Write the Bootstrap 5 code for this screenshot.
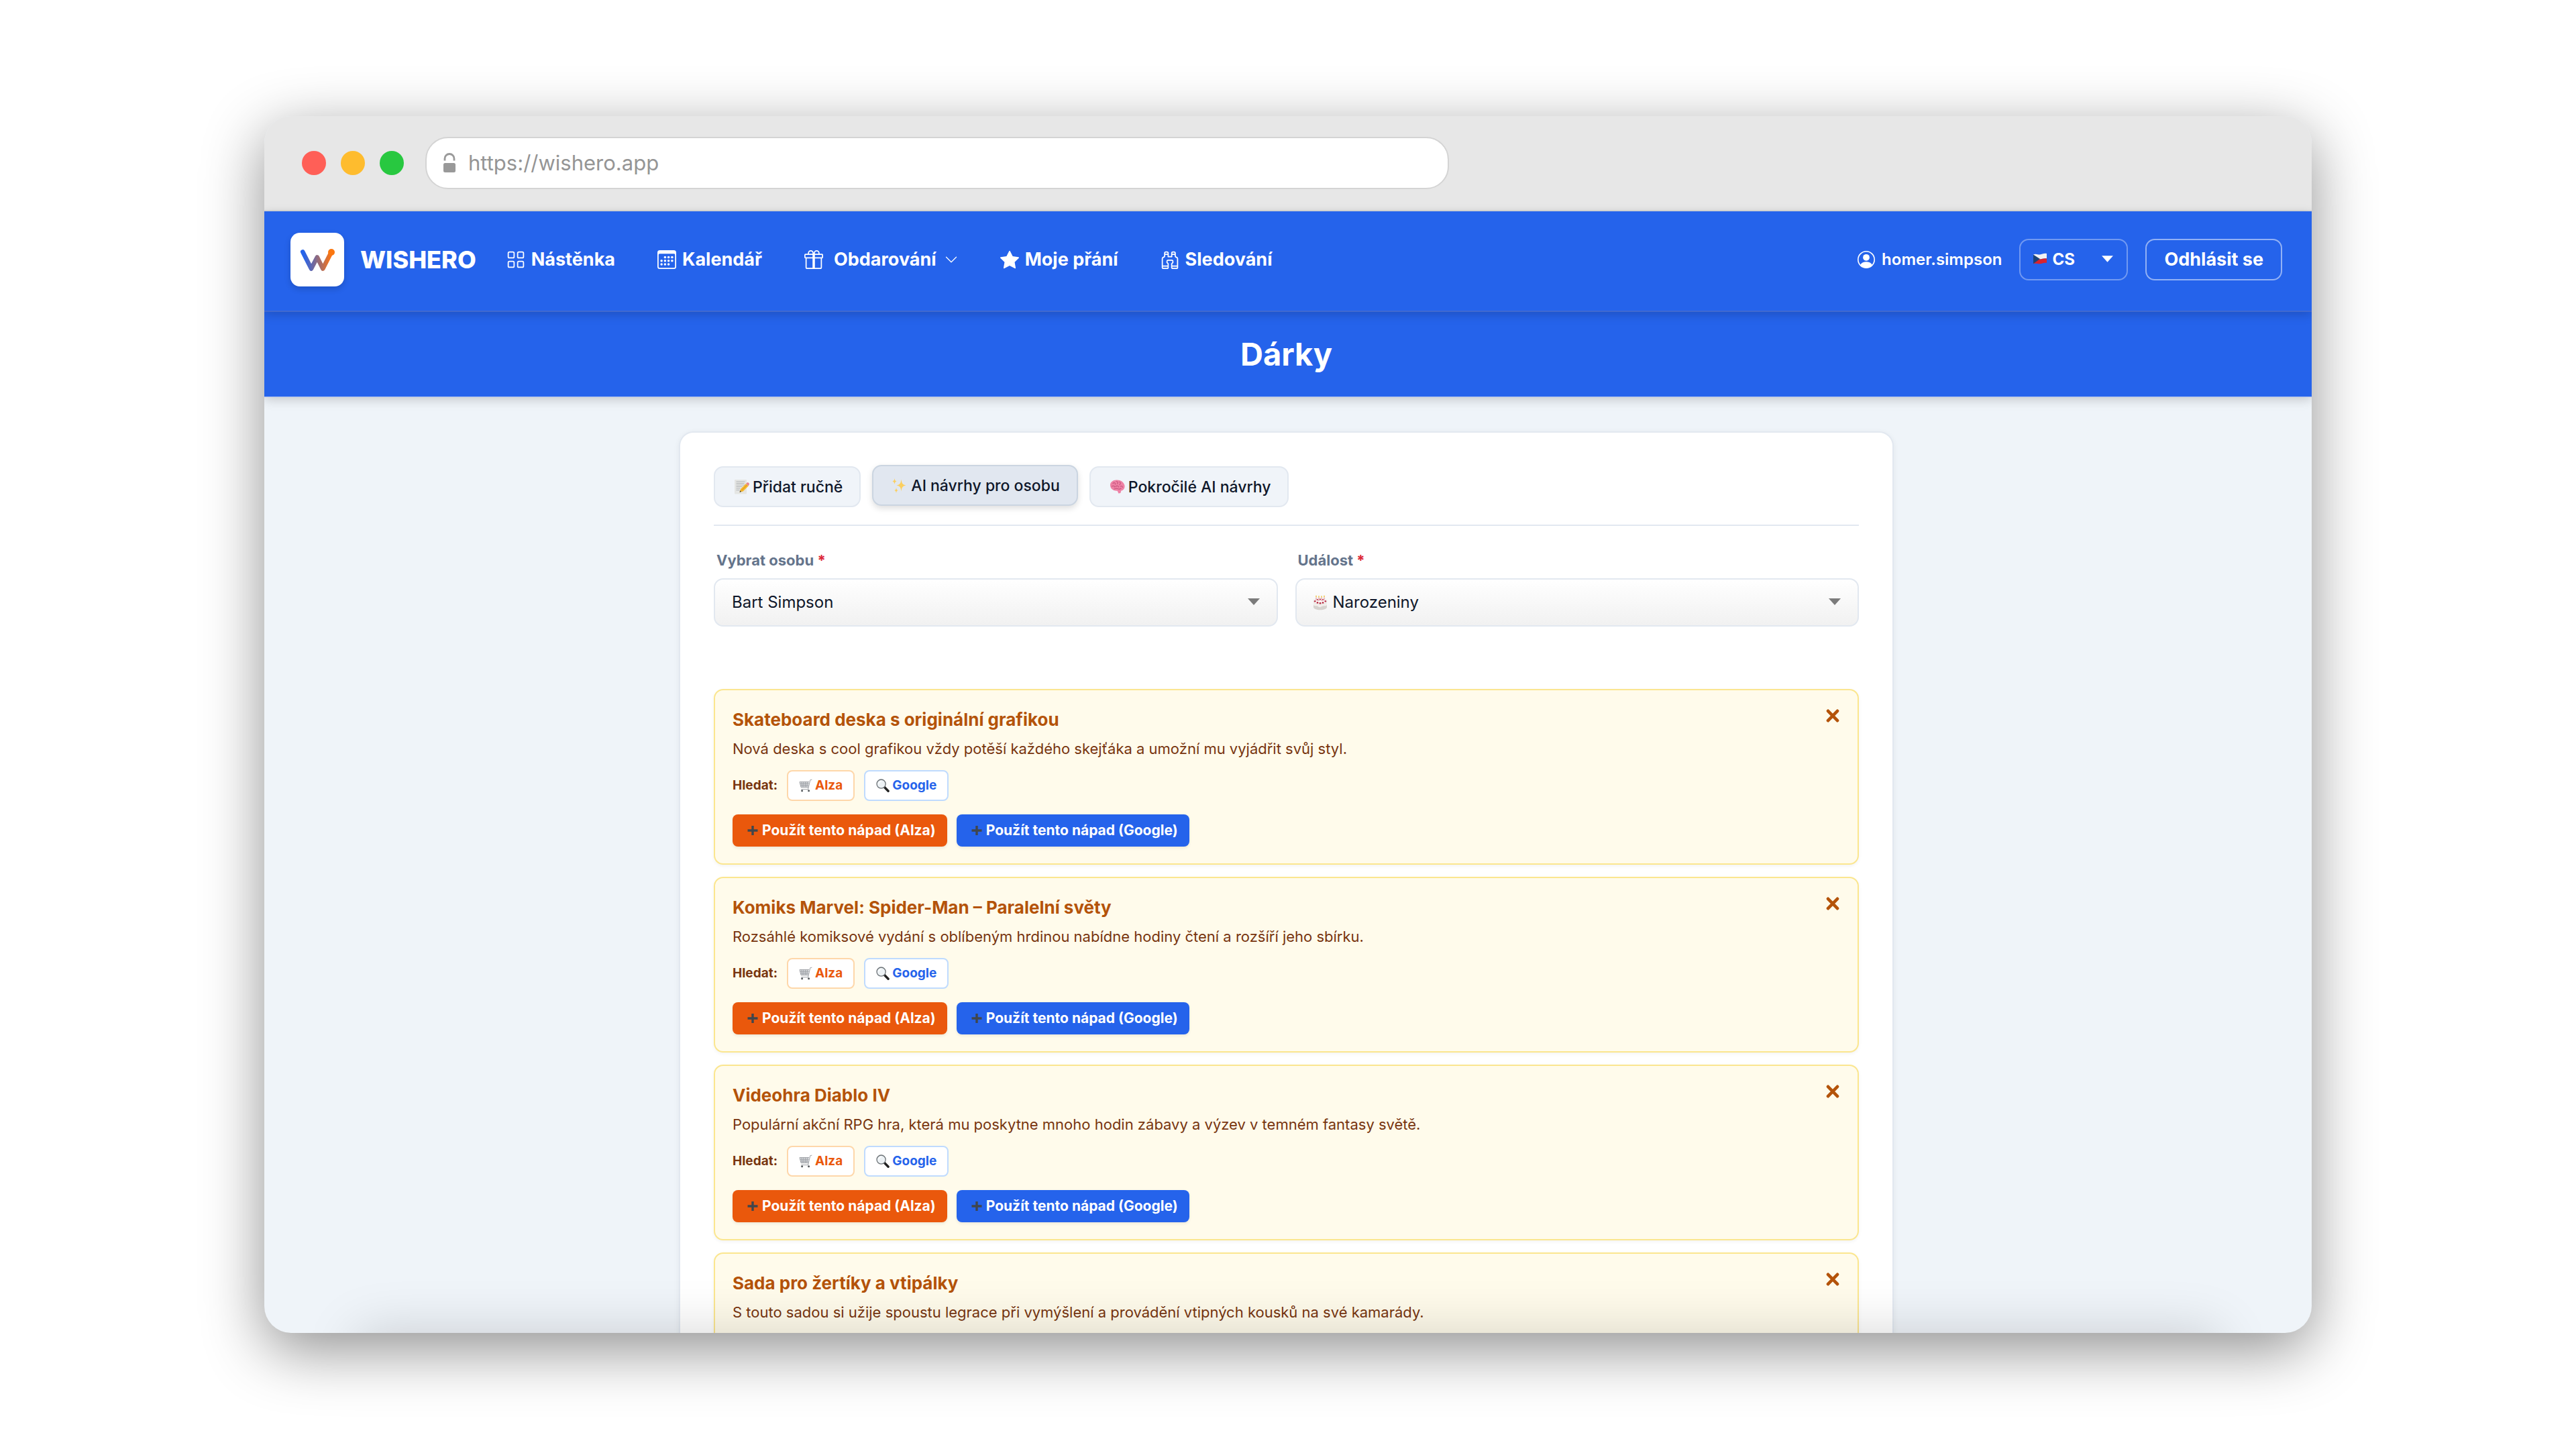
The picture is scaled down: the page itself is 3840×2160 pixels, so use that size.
<!DOCTYPE html>
<html lang="cs">
<head>
<meta charset="utf-8">
<meta name="viewport" content="width=device-width, initial-scale=1">
<title>WISHERO – Dárky</title>
<link href="https://cdn.jsdelivr.net/npm/bootstrap@5.3.0/dist/css/bootstrap.min.css" rel="stylesheet">
<style>
  :root { --brand: #2563eb; --ink: #0f172a; --line: #e2e8f0; --surface: #eff4f9; }
  body { font-family: Inter, "Liberation Sans", sans-serif; background: #fff; color: var(--ink); padding: 173px 394px; }
  svg { display: block; flex: none; }
  select { appearance: none; }

  /* Browser frame */
  .browser { height: calc(100vh - 346px); border-radius: 40px; background: var(--surface); box-shadow: 0 25px 90px rgba(0,0,0,.44); }
  .browser::after { content: ""; position: absolute; left: 140px; right: 140px; top: 100%; height: 90px; box-shadow: 0 0 80px rgba(0,0,0,.17); pointer-events: none; }
  .chrome { height: 142px; padding: 0 56px; background: #e7e7e7; border-bottom: 2px solid #dadada; }
  .lights { gap: 22px; margin-right: 32px; }
  .light { width: 36px; height: 36px; border-radius: 50%; }
  .light-close { background: #ff5f57; }
  .light-min { background: #febc2e; }
  .light-max { background: #28c840; }
  .address { width: 51.9%; height: 78px; padding: 0 24px; gap: 18px; border: 2px solid #d4d4d4; border-radius: 34px; background: #fff; color: #999; }
  .address input { border: 0; outline: 0; padding: 0; background: none; color: #959595; font-size: 31px; line-height: 40px; }

  /* Top navigation */
  .topbar { padding: 32px 44px 36px 39px; background: var(--brand); border-bottom: 2px solid #4169d0; box-shadow: 0 4px 14px rgba(0,0,0,.18); z-index: 2; }
  .brand { gap: 24px; font-size: 36px; line-height: 44px; font-weight: 800; color: #fff; text-decoration: none; margin-right: 45px; }
  .brand svg { border-radius: 14px; background: #fff; box-shadow: 0 4px 10px rgba(0,0,0,.16); }
  .menu { gap: 63px; font-size: 27px; line-height: 36px; }
  .menu a, .menu button { display: flex; align-items: center; gap: 9px; padding: 0; border: 0; background: none; color: #fff; text-decoration: none; font-weight: 700; white-space: nowrap; }
  .menu button { gap: 16px; }
  .menu button svg:last-child { margin-left: -4px; }
  .account { gap: 26px; color: #fff; }
  .user { gap: 10px; font-size: 24px; line-height: 32px; font-weight: 600; color: #fff; text-decoration: none; }
  .lang select { width: 162px; height: 62px; padding: 0 0 0 47px; border: 2px solid rgba(255,255,255,.35); border-radius: 14px; color: #fff; font-size: 24px; font-weight: 700; background: none; }
  .lang .flag { position: absolute; left: 20px; top: 21px; pointer-events: none; }
  .lang .caret { position: absolute; right: 22px; top: 25px; pointer-events: none; }
  .btn-logout { height: 62px; padding: 0 26px; border: 2px solid rgba(255,255,255,.5); border-radius: 14px; color: #fff; font-size: 27px; line-height: 36px; font-weight: 700; }
  .titlebar { height: 127px; padding-right: 5px; background: var(--brand); border-bottom: 1px solid #9db5ee; box-shadow: 0 3px 16px rgba(0,0,0,.2); z-index: 1; }
  .titlebar h1 { font-size: 47px; line-height: 60px; font-weight: 700; color: #fff; }

  /* Content panel */
  .stage { padding: 51px 5px 51px 0; }
  .panel { max-width: 1811px; padding: 50px; border: 2px solid var(--line); border-radius: 22px; background: #fff; box-shadow: 0 2px 10px rgba(15,23,42,.06); }
  .tabs { gap: 17px; padding-bottom: 26px; border-bottom: 2px solid var(--line); margin-bottom: 36px; }
  .tab { height: 61px; padding: 0 25px 0 28px; gap: 5px; display: flex; align-items: center; border: 2px solid var(--line); border-radius: 14px; background: #f0f4f9; color: var(--ink); font-size: 23px; line-height: 30px; font-weight: 500; white-space: nowrap; }
  .tab.active { background: #e1e7f0; border-color: #cbd5e1; box-shadow: 0 4px 10px rgba(0,0,0,.13); transform: translateY(-2px); }
  .fields { --bs-gutter-x: 26px; margin-bottom: 93px; }
  .fields label { display: block; padding-left: 4px; margin-bottom: 12px; font-size: 22px; line-height: 30px; font-weight: 700; color: #64748b; }
  .req { color: #dc2638; }
  .pick { color: #7b7b7b; }
  .pick select { height: 72px; padding: 0 25px; border: 2px solid var(--line); border-radius: 14px; color: var(--ink); font-size: 24px; line-height: 32px; background: linear-gradient(#fff, #f1f1f1); }
  .pick .with-icon { padding-left: 54px; }
  .pick .cake { position: absolute; left: 26px; top: 25px; pointer-events: none; }
  .pick .caret { position: absolute; right: 27px; top: 30px; pointer-events: none; }

  /* Gift ideas */
  .ideas { gap: 18px; }
  .idea { min-height: 262px; padding: 26px 24px 25px 26px; border: 2px solid #fbe68f; border-radius: 14px; background: #fffbeb; box-shadow: 0 2px 5px rgba(0,0,0,.05); }
  .idea h2 { margin: 0 0 8px; font-size: 26px; line-height: 36px; font-weight: 700; color: #b45309; }
  .idea p { margin: 0 0 15px; font-size: 22px; line-height: 34px; color: #78350f; }
  .find { gap: 14px; margin-bottom: 20px; font-size: 19px; line-height: 26px; font-weight: 700; color: #78350f; }
  .find a { display: flex; align-items: center; gap: 4px; height: 46px; padding: 0 16px; border: 2px solid; border-radius: 8px; background: #fff; text-decoration: none; }
  .find .to-alza { color: #ea580c; border-color: #fed7aa; }
  .find .to-google { color: var(--brand); border-color: #bfdbfe; }
  .uses { gap: 14px; }
  .uses button { display: flex; align-items: center; gap: 6px; height: 48px; padding: 0 17px 0 22px; border: 0; border-radius: 8px; color: #fff; font-size: 21px; line-height: 28px; font-weight: 700; white-space: nowrap; box-shadow: 0 2px 4px rgba(0,0,0,.08); }
  .use-alza { background: #ea580c; }
  .use-google { background: var(--brand); }
  .dismiss { padding: 2px 3px; border: 0; background: none; color: #b45309; }
</style>
</head>
<body>

<svg width="0" height="0" class="position-absolute" aria-hidden="true">
  <defs>
    <symbol id="i-cart" viewBox="0 0 20 20">
      <path d="M1 4.500h14.200L14 12.600H3z" fill="#dfe1e4"/>
      <path d="M1 4.500h14.200M1.800 7.200h13M2.300 9.900h12.200M4 4.500l1 8M6.800 4.500l.4 8M9.600 4.500v8M12.400 4.500l-.6 8M1 4.500l2 8.100h11.200M3.400 15.600h11M19.400 1.200l-2.600.5-3.200 13.600" fill="none" stroke="#969a9f" stroke-width=".9"/>
      <circle cx="4.600" cy="17.800" r="1.500" fill="#55595d"/><circle cx="14.600" cy="17.800" r="1.500" fill="#55595d"/>
    </symbol>
    <symbol id="i-lens" viewBox="0 0 20 20">
      <path d="M12.300 12.300l5.800 6" stroke="#222" stroke-width="3.400" stroke-linecap="round"/>
      <circle cx="7.600" cy="7.600" r="6.600" fill="#edf2f5" stroke="#6b7175" stroke-width="1.300"/>
      <path d="M4 6.600a4 4 0 0 1 3.400-2.700" fill="none" stroke="#fff" stroke-width="1.300" stroke-linecap="round"/>
    </symbol>
    <symbol id="i-plus" viewBox="0 0 16 16"><path d="M8 1v14M.5 8h15" stroke="#40464c" stroke-width="3.400" fill="none"/></symbol>
    <symbol id="i-cross" viewBox="0 0 20 20"><path d="M3 2.800l14 14.400M17 2.800L3 17.200" stroke="currentColor" stroke-width="4.600" fill="none" stroke-linecap="round"/></symbol>
    <symbol id="i-caret" viewBox="0 0 18 10"><path d="M0 0h18L9 10z" fill="currentColor"/></symbol>
    <linearGradient id="wgrad" gradientUnits="userSpaceOnUse" x1="18" y1="0" x2="62" y2="0">
      <stop offset="0.05" stop-color="#2563eb"/><stop offset="0.95" stop-color="#f97316"/>
    </linearGradient>
  </defs>
</svg>

<div class="browser position-relative overflow-hidden d-flex flex-column">
  <div class="chrome d-flex align-items-center flex-shrink-0">
    <div class="lights d-flex"><span class="light light-close"></span><span class="light light-min"></span><span class="light light-max"></span></div>
    <div class="address d-flex align-items-center">
      <svg width="20" height="30" viewBox="0 0 20 30"><rect x="1" y="15" width="18" height="14" rx="2.500" fill="#999"/><path d="M3 11.500V8.500a7 7 0 0 1 14 0v3" fill="none" stroke="#999" stroke-width="2.800"/></svg>
      <input class="flex-grow-1" type="text" value="https://wishero.app" aria-label="Adresa">
    </div>
  </div>

  <nav class="topbar d-flex align-items-center justify-content-between position-relative flex-shrink-0">
    <div class="d-flex align-items-center">
      <a class="brand d-flex align-items-center" href="#">
        <svg width="80" height="80" viewBox="0 0 80 80"><path d="M18.300 28.500L31 53.500 39.800 36.500 48.300 53.500 60.500 29.500" fill="none" stroke="url(#wgrad)" stroke-width="6.600" stroke-linecap="round" stroke-linejoin="round"/><circle cx="61" cy="29" r="5" fill="#fb7710"/></svg>
        WISHERO
      </a>
      <div class="menu d-flex align-items-center">
        <a href="#"><svg width="28" height="28" viewBox="0 0 16 16" fill="none" stroke="#fff"><rect x="1.500" y="1.500" width="5" height="5" rx="1"/><rect x="9.500" y="1.500" width="5" height="5" rx="1"/><rect x="1.500" y="9.500" width="5" height="5" rx="1"/><rect x="9.500" y="9.500" width="5" height="5" rx="1"/></svg>Nástěnka</a>
        <a href="#"><svg width="28" height="28" viewBox="0 0 16 16" fill="#fff"><path d="M14 0H2a2 2 0 0 0-2 2v12a2 2 0 0 0 2 2h12a2 2 0 0 0 2-2V2a2 2 0 0 0-2-2zM1 3.857C1 3.384 1.448 3 2 3h12c.552 0 1 .384 1 .857v10.286c0 .473-.448.857-1 .857H2c-.552 0-1-.384-1-.857V3.857z"/><circle cx="6.500" cy="6" r="1"/><circle cx="9.500" cy="6" r="1"/><circle cx="12.500" cy="6" r="1"/><circle cx="3.500" cy="9" r="1"/><circle cx="6.500" cy="9" r="1"/><circle cx="9.500" cy="9" r="1"/><circle cx="12.500" cy="9" r="1"/><circle cx="3.500" cy="12" r="1"/><circle cx="6.500" cy="12" r="1"/><circle cx="9.500" cy="12" r="1"/></svg>Kalendář</a>
        <button type="button" aria-haspopup="true"><svg width="28" height="28" viewBox="0 0 16 16" fill="#fff"><path d="M3 2.500a2.500 2.500 0 0 1 5 0 2.500 2.500 0 0 1 5 0v.006c0 .07 0 .27-.038.494H15a1 1 0 0 1 1 1v2a1 1 0 0 1-1 1v7.500a1.500 1.500 0 0 1-1.500 1.500h-11A1.500 1.500 0 0 1 1 14.500V7a1 1 0 0 1-1-1V4a1 1 0 0 1 1-1h2.038A2.968 2.968 0 0 1 3 2.506V2.500zm1.068.5H7v-.5a1.500 1.500 0 1 0-3 0c0 .085.002.274.045.43a.522.522 0 0 0 .023.07zM9 3h2.932a.56.56 0 0 0 .023-.07c.043-.156.045-.345.045-.43a1.500 1.500 0 0 0-3 0V3zM1 4v2h6V4H1zm8 0v2h6V4H9zm5 3H9v8h4.500a.5.5 0 0 0 .5-.5V7zm-7 8V7H2v7.500a.5.5 0 0 0 .5.5H7z"/></svg>Obdarování<svg width="20" height="20" viewBox="0 0 16 16" fill="none" stroke="#fff" stroke-linecap="round" stroke-linejoin="round"><path d="M2 5l6 6 6-6"/></svg></button>
        <a href="#"><svg width="28" height="28" viewBox="0 0 16 16" fill="#fff"><path d="M3.612 15.443c-.386.198-.824-.149-.746-.592l.83-4.730L.173 6.765c-.329-.314-.158-.888.283-.95l4.898-.696L7.538.792c.197-.39.73-.39.927 0l2.184 4.327 4.898.696c.441.062.612.636.282.95l-3.522 3.356.83 4.730c.078.443-.36.79-.746.592L8 13.187l-4.389 2.256z"/></svg>Moje přání</a>
        <a href="#"><svg width="28" height="28" viewBox="0 0 16 16" fill="#fff"><path d="M3 2.500A1.500 1.500 0 0 1 4.500 1h1A1.500 1.500 0 0 1 7 2.500V5h2V2.500A1.500 1.500 0 0 1 10.500 1h1A1.500 1.500 0 0 1 13 2.500v2.382a.5.5 0 0 0 .276.447l.895.447A1.500 1.500 0 0 1 15 7.118V14.500a1.500 1.500 0 0 1-1.500 1.500h-3A1.500 1.500 0 0 1 9 14.500v-3a.5.5 0 0 1 .146-.354l.854-.853V9.500a.5.5 0 0 0-.5-.5h-3a.5.5 0 0 0-.5.5v.793l.854.853A.5.5 0 0 1 7 11.500v3A1.500 1.500 0 0 1 5.500 16h-3A1.500 1.500 0 0 1 1 14.500V7.118a1.500 1.500 0 0 1 .83-1.342l.894-.447A.5.5 0 0 0 3 4.882V2.500zM4.500 2a.5.5 0 0 0-.5.5V3h2v-.5a.5.5 0 0 0-.5-.5h-1zM6 4H4v.882a1.500 1.500 0 0 1-.83 1.342l-.894.447A.5.5 0 0 0 2 7.118V13h4v-1.293l-.854-.853A.5.5 0 0 1 5 10.500v-1A1.500 1.500 0 0 1 6.500 8h3A1.500 1.500 0 0 1 11 9.500v1a.5.5 0 0 1-.146.354l-.854.853V13h4V7.118a.5.5 0 0 0-.276-.447l-.895-.447A1.500 1.500 0 0 1 12 4.882V4h-2v1.500a.5.5 0 0 1-.5.5h-3a.5.5 0 0 1-.5-.5V4zm4-1h2v-.5a.5.5 0 0 0-.5-.5h-1a.5.5 0 0 0-.5.5V3zm4 11h-4v.5a.5.5 0 0 0 .5.5h3a.5.5 0 0 0 .5-.5V14zm-8 0H2v.5a.5.5 0 0 0 .5.5h3a.5.5 0 0 0 .5-.5V14z"/></svg>Sledování</a>
      </div>
    </div>
    <div class="account d-flex align-items-center">
      <a class="user d-flex align-items-center" href="#"><svg width="26" height="26" viewBox="0 0 26 26"><circle cx="13" cy="13" r="12.200" fill="none" stroke="#fff" stroke-width="1.600"/><circle cx="13" cy="9.800" r="4.900" fill="#fff"/><path d="M4 21c2-3.400 5.200-4.800 9-4.800s7 1.400 9 4.800c-2.200 2.600-5.500 4.200-9 4.200S6.200 23.600 4 21z" fill="#fff"/></svg>homer.simpson</a>
      <div class="lang position-relative">
        <select aria-label="Jazyk"><option>CS</option></select>
        <svg class="flag" width="22" height="17" viewBox="0 0 22 17"><path d="M1 2.500C5 .5 8 3 11 2.500S17 0 21 1v7.500c-4-.8-7 .8-10 1H1z" fill="#f1f1f3"/><path d="M1 9.500h10c3 0 6-1.800 10-1V15c-4-1-7 .8-10 1.200S5 15 1 16z" fill="#d8232f"/><path d="M1 2.500L11 9 1 16z" fill="#1b4377"/></svg>
        <svg class="caret" width="17" height="10"><use href="#i-caret"/></svg>
      </div>
      <button type="button" class="btn-logout bg-transparent">Odhlásit se</button>
    </div>
  </nav>

  <header class="titlebar d-flex align-items-center justify-content-center position-relative flex-shrink-0"><h1 class="m-0">Dárky</h1></header>

  <main class="stage flex-shrink-0">
    <section class="panel mx-auto">
      <div class="tabs d-flex" role="tablist">
        <button type="button" class="tab" role="tab">
          <svg width="23" height="23" viewBox="0 0 23 23"><rect x="1" y="1" width="18" height="21.500" rx="1" fill="#e4e5e3"/><path d="M3.500 4h13M3.500 6.500h12M3.500 9h13M3.500 11.500h9M3.500 14h6M3.500 16.500h5" stroke="#b4b7b9" stroke-width="1"/><path d="M8.500 19.800L10 15l8-8 3.600 3.400-8 8z" fill="#f5b82e"/><path d="M11.800 16.700l8-8" stroke="#d98f14" stroke-width="1"/><path d="M18 7l1.600-1.500a1.500 1.500 0 0 1 2 0l1 1a1.500 1.500 0 0 1 0 2l-1 1.900z" fill="#e8848b"/><path d="M8.500 19.800l.9-2.600 1.700 1.700z" fill="#3c3c3c"/></svg>Přidat ručně</button>
        <button type="button" class="tab active" role="tab" aria-selected="true">
          <svg width="23" height="23" viewBox="0 0 23 23" fill="#fbcf60"><path d="M13.500 2.500c.8 6 1.800 7.800 7 9-5.200 1.200-6.200 3-7 9-.8-6-1.800-7.800-7-9 5.200-1.200 6.200-3 7-9z"/><path d="M3.500 1c.5 3 .9 3.800 3.300 4.500C4.400 6.200 4 7 3.500 10 3 7 2.600 6.200.2 5.500 2.600 4.800 3 4 3.500 1z"/><path d="M6 15c.4 2.600.8 3.300 2.800 4-2 .7-2.400 1.400-2.800 4-.4-2.600-.8-3.300-2.800-4 2-.7 2.400-1.400 2.800-4z"/></svg>AI návrhy pro osobu</button>
        <button type="button" class="tab" role="tab">
          <svg width="23" height="23" viewBox="0 0 23 23"><path d="M1 10C.5 5 5 1.500 10 1.500c6-.5 11 2.500 12.300 7.500 1 4-1 8-5 8.500l-1 3.500-3 .500-1.500-3.800C7 18 1.500 15.500 1 10z" fill="#ee82a5"/><path d="M5 6.500c2-2 4-.5 3.500 1.500M10 3.500c2 0 3 2 1.500 3.500M15 4.500c2 1 1.500 3 0 4M3.500 11c2-1.500 4-.5 4 1M9 11.500c2-2 4-1.500 4.500.5M16 11c2-1 3.500 0 3.500 1.500M7 15c2-.5 3-1.500 5-.5s4 .5 5-.5" fill="none" stroke="#c9567f" stroke-width="1.200" stroke-linecap="round"/></svg>Pokročilé AI návrhy</button>
      </div>

      <div class="fields row">
        <div class="col-6">
          <label for="person">Vybrat osobu <span class="req">*</span></label>
          <div class="pick position-relative">
            <select id="person" class="w-100"><option>Bart Simpson</option></select>
            <svg class="caret" width="18" height="10"><use href="#i-caret"/></svg>
          </div>
        </div>
        <div class="col-6">
          <label for="event">Událost <span class="req">*</span></label>
          <div class="pick position-relative">
            <select id="event" class="w-100 with-icon"><option>Narozeniny</option></select>
            <svg class="cake" width="22" height="23" viewBox="0 0 22 23"><path d="M1 9v9c0 2.500 4.500 4.300 10 4.300s10-1.800 10-4.300V9z" fill="#d6d2ce"/><path d="M1 8v7c3 2.500 5 .5 6.500 2s4 1.500 6 0 5 .3 7.500-2V8z" fill="#f1eeeb"/><ellipse cx="11" cy="9" rx="10" ry="4.500" fill="#fbfaf8" stroke="#ddd8d4" stroke-width=".6"/><path d="M5 3.500v4.500M9 4v5M13 4v5M17 3.500v4.500" stroke="#e6a3ae" stroke-width="1.300"/><path d="M5 .8v2.400M9 1.300v2.400M13 1.300v2.400M17 .8v2.400" stroke="#f0c34c" stroke-width="1.500"/><g fill="#b93248"><circle cx="3.200" cy="9.200" r="1.300"/><circle cx="7" cy="11.400" r="1.400"/><circle cx="11" cy="12.200" r="1.400"/><circle cx="15" cy="11.400" r="1.400"/><circle cx="18.800" cy="9.200" r="1.300"/><circle cx="7" cy="7" r="1.100"/><circle cx="11" cy="6.500" r="1.100"/><circle cx="15" cy="7" r="1.100"/></g></svg>
            <svg class="caret" width="18" height="10"><use href="#i-caret"/></svg>
          </div>
        </div>
      </div>

      <div class="ideas d-flex flex-column">
        <article class="idea d-flex justify-content-between align-items-start">
          <div>
            <h2>Skateboard deska s originální grafikou</h2>
            <p>Nová deska s cool grafikou vždy potěší každého skejťáka a umožní mu vyjádřit svůj styl.</p>
            <div class="find d-flex align-items-center"><span>Hledat:</span><a class="to-alza" href="#"><svg width="20" height="20"><use href="#i-cart"/></svg>Alza</a><a class="to-google" href="#"><svg width="20" height="20"><use href="#i-lens"/></svg>Google</a></div>
            <div class="uses d-flex"><button type="button" class="use-alza"><svg width="16" height="16"><use href="#i-plus"/></svg>Použít tento nápad (Alza)</button><button type="button" class="use-google"><svg width="16" height="16"><use href="#i-plus"/></svg>Použít tento nápad (Google)</button></div>
          </div>
          <button type="button" class="dismiss" aria-label="Zavřít"><svg width="20" height="20"><use href="#i-cross"/></svg></button>
        </article>
        <article class="idea d-flex justify-content-between align-items-start">
          <div>
            <h2>Komiks Marvel: Spider-Man – Paralelní světy</h2>
            <p>Rozsáhlé komiksové vydání s oblíbeným hrdinou nabídne hodiny čtení a rozšíří jeho sbírku.</p>
            <div class="find d-flex align-items-center"><span>Hledat:</span><a class="to-alza" href="#"><svg width="20" height="20"><use href="#i-cart"/></svg>Alza</a><a class="to-google" href="#"><svg width="20" height="20"><use href="#i-lens"/></svg>Google</a></div>
            <div class="uses d-flex"><button type="button" class="use-alza"><svg width="16" height="16"><use href="#i-plus"/></svg>Použít tento nápad (Alza)</button><button type="button" class="use-google"><svg width="16" height="16"><use href="#i-plus"/></svg>Použít tento nápad (Google)</button></div>
          </div>
          <button type="button" class="dismiss" aria-label="Zavřít"><svg width="20" height="20"><use href="#i-cross"/></svg></button>
        </article>
        <article class="idea d-flex justify-content-between align-items-start">
          <div>
            <h2>Videohra Diablo IV</h2>
            <p>Populární akční RPG hra, která mu poskytne mnoho hodin zábavy a výzev v temném fantasy světě.</p>
            <div class="find d-flex align-items-center"><span>Hledat:</span><a class="to-alza" href="#"><svg width="20" height="20"><use href="#i-cart"/></svg>Alza</a><a class="to-google" href="#"><svg width="20" height="20"><use href="#i-lens"/></svg>Google</a></div>
            <div class="uses d-flex"><button type="button" class="use-alza"><svg width="16" height="16"><use href="#i-plus"/></svg>Použít tento nápad (Alza)</button><button type="button" class="use-google"><svg width="16" height="16"><use href="#i-plus"/></svg>Použít tento nápad (Google)</button></div>
          </div>
          <button type="button" class="dismiss" aria-label="Zavřít"><svg width="20" height="20"><use href="#i-cross"/></svg></button>
        </article>
        <article class="idea d-flex justify-content-between align-items-start">
          <div>
            <h2>Sada pro žertíky a vtipálky</h2>
            <p>S touto sadou si užije spoustu legrace při vymýšlení a provádění vtipných kousků na své kamarády.</p>
          </div>
          <button type="button" class="dismiss" aria-label="Zavřít"><svg width="20" height="20"><use href="#i-cross"/></svg></button>
        </article>
      </div>
    </section>
  </main>
</div>

<script src="https://cdn.jsdelivr.net/npm/bootstrap@5.3.0/dist/js/bootstrap.bundle.min.js"></script>
</body>
</html>
